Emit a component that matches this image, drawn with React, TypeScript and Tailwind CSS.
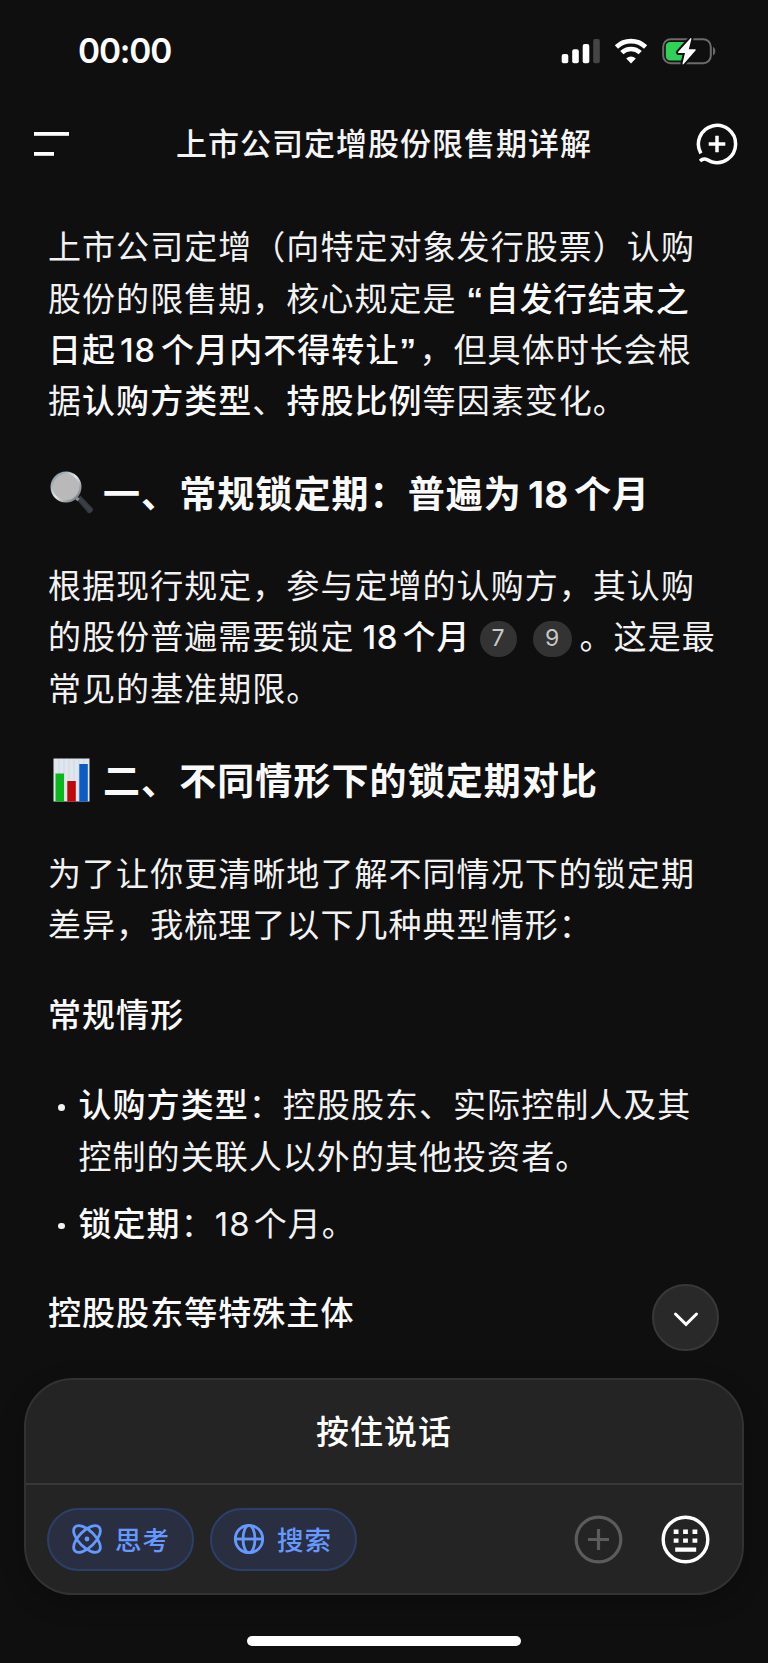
import type { ReactNode } from 'react';

function Line({ children }: { children: ReactNode }) {
  return <span className="block whitespace-nowrap">{children}</span>;
}

function B({ children }: { children: ReactNode }) {
  return <b className="font-medium text-[#fafafa]">{children}</b>;
}

function Cite({ children, className }: { children: ReactNode; className: string }) {
  return (
    <span
      className={`mb-[3px] inline-flex h-9 items-center justify-center rounded-full bg-[#333333] align-middle text-[23px] leading-none tracking-normal text-[#c8c8c8] ${className}`}
    >
      {children}
    </span>
  );
}

function StatusBar() {
  return (
    <div className="flex h-[102px] items-center justify-between pl-[78px] pr-[51px]">
      <span className="pt-[2px] text-[33.500px] font-semibold leading-none tracking-[-1.200px] text-white">00:00</span>
      <div className="flex items-center gap-[14px]">
        <svg width="40" height="26" viewBox="0 0 40 26" fill="#fff">
          <rect x="1.7" y="16" width="6.6" height="9.3" rx="2" />
          <rect x="12.2" y="11.300" width="6.6" height="14" rx="2" />
          <rect x="22.7" y="6" width="6.6" height="19.3" rx="2" />
          <rect x="33.2" y="1" width="6.6" height="24.3" rx="2" fill="#454545" />
        </svg>
        <svg width="34" height="26" viewBox="0 0 34 26" fill="none" stroke="#fff" strokeWidth="4.600">
          <path d="M2.400 9a21.200 21.200 0 0 1 29.200 0" />
          <path d="M7.800 14.700a13.300 13.300 0 0 1 18.400 0" />
          <path d="M17 25.500l-4.800-5a7 7 0 0 1 9.600 0z" fill="#fff" stroke="none" />
        </svg>
        <svg width="55" height="28" viewBox="0 0 55 28">
          <rect x="1.200" y="2.200" width="47.600" height="24" rx="7.500" fill="none" stroke="#6b6b6b" strokeWidth="2" />
          <path d="M51 10v8.400c3-.8 3-7.600 0-8.400z" fill="#6b6b6b" />
          <path d="M8 5h16v18.400H8a4.200 4.200 0 0 1-4.200-4.200V9.200A4.200 4.200 0 0 1 8 5z" fill="#30d158" />
          <path
            d="M28.300 1.400L16.200 14.800c-.5.600-.2 1.200.5 1.200h6.300L20.500 26.500c-.2.900.6 1.200 1.200.5L33.500 13.500c.5-.6.2-1.200-.5-1.200h-6.200L29.400 1.900c.2-.8-.6-1.100-1.100-.5z"
            fill="#fff"
            stroke="#0f0f0f"
            strokeWidth="4"
            paintOrder="stroke"
          />
        </svg>
      </div>
    </div>
  );
}

function Header() {
  return (
    <header className="flex h-[84px] items-center justify-between pl-[34px] pr-[30px]">
      <svg width="38" height="28" viewBox="0 0 38 28" fill="#fff">
        <rect x="0" y="2" width="35" height="3.800" />
        <rect x="0" y="22" width="20" height="3.800" />
      </svg>
      <h1 className="pb-px text-[31px] font-medium leading-none tracking-[1px] text-[#f5f5f5]">上市公司定增股份限售期详解</h1>
      <svg width="42" height="42" viewBox="0 0 42 42" fill="none" stroke="#fff" strokeWidth="3.500">
        <path d="M4.900 30.300A18.600 18.600 0 1 1 15.500 38.770C12 37.500 8.600 33.700 4 38" strokeLinejoin="round" />
        <path d="M21 12.700v16.600M12.700 21h16.600" />
      </svg>
    </header>
  );
}

function MagnifierEmoji() {
  return (
    <svg width="44" height="44" viewBox="0 0 44 44" className="mb-[2px] shrink-0">
      <defs>
        <linearGradient id="handle" x1="0" y1="1" x2="1" y2="0">
          <stop offset="0" stopColor="#16181b" />
          <stop offset="0.500" stopColor="#3c4148" />
          <stop offset="1" stopColor="#15171a" />
        </linearGradient>
        <linearGradient id="rim" x1="0" y1="0" x2="1" y2="1">
          <stop offset="0" stopColor="#6f8796" />
          <stop offset="0.500" stopColor="#e4e8ea" />
          <stop offset="1" stopColor="#596068" />
        </linearGradient>
      </defs>
      <path d="M26.500 28.500l4-4 12.200 12.800c1.500 1.700-2.700 6.200-4.700 4.600z" fill="url(#handle)" />
      <path d="M25 26l3.500 3" stroke="#8a949c" strokeWidth="3" />
      <circle cx="16" cy="16" r="14.300" fill="#b9b9b9" stroke="url(#rim)" strokeWidth="2.400" />
    </svg>
  );
}

function ChartEmoji() {
  return (
    <svg width="44" height="44" viewBox="0 0 44 44" className="mb-[3px] shrink-0">
      <rect x="3.500" y="0.500" width="36" height="43" fill="#dfe6ee" />
      <path d="M9 1v42M14 1v42M19 1v42M24 1v42M29 1v42M34 1v42" stroke="#cfd7e0" strokeWidth="1" />
      <rect x="5.500" y="15.500" width="8.500" height="28" fill="#0bb81c" />
      <rect x="17.300" y="23" width="8.500" height="20.500" fill="#c00808" />
      <rect x="29.300" y="6" width="8.500" height="37.500" fill="#0a5cc4" />
    </svg>
  );
}

function Answer() {
  return (
    <main className="flex h-[1192px] flex-col pl-[48px] pt-[36.400px] text-[33px] leading-[51.200px] tracking-[1.050px] text-[#f2f2f2]">
      <p>
        <Line>上市公司定增（向特定对象发行股票）认购</Line>
        <Line>
          股份的限售期，核心规定是
          <B>
            <span className="inline-block w-[29px] pl-[10px] font-['Liberation_Sans'] font-bold">“</span>自发行结束之
          </B>
        </Line>
        <Line>
          <B>
            日起<span className="inline-block w-[45px] pl-[4px] tracking-[0.500px]">18</span>个月内不得转让
            <span className="inline-block w-[20px] font-['Liberation_Sans'] font-bold">”</span>
          </B>
          ，但具体时长会根
        </Line>
        <Line>
          据<B>认购方类型</B>、<B>持股比例</B>等因素变化。
        </Line>
      </p>

      <h2 className="mt-[41px] flex h-[52px] items-center whitespace-nowrap pl-[2px] text-[37px] font-bold tracking-[1.080px] text-[#fafafa]">
        <MagnifierEmoji />
        <span className="pl-[9px]">
          一、常规锁定期：普遍为<span className="inline-block w-[52px] pl-[6px] tracking-[0.500px]">18</span>个月
        </span>
      </h2>

      <p className="mt-[41px]">
        <Line>根据现行规定，参与定增的认购方，其认购</Line>
        <Line>
          的股份普遍需要锁定
          <B>
            <span className="inline-block w-[48px] pl-[8px] tracking-[0.500px]">18</span>个月
          </B>
          <Cite className="ml-[9px] w-[37px]">7</Cite>
          <Cite className="ml-[16px] mr-[8px] w-[39px]">9</Cite>。这是最
        </Line>
        <Line>常见的基准期限。</Line>
      </p>

      <h2 className="mt-[41px] flex h-[52px] items-center whitespace-nowrap pl-[2px] text-[37px] font-bold tracking-[1.080px] text-[#fafafa]">
        <ChartEmoji />
        <span className="pl-[9px]">二、不同情形下的锁定期对比</span>
      </h2>

      <p className="mt-[41px]">
        <Line>为了让你更清晰地了解不同情况下的锁定期</Line>
        <Line>差异，我梳理了以下几种典型情形：</Line>
      </p>

      <h3 className="mt-[39px] font-medium text-[#fafafa]">常规情形</h3>

      <ul className="mt-[39px] flex flex-col gap-[16px]">
        <li className="flex">
          <span className="ml-[10px] mr-[14px] mt-[24px] size-[6.500px] shrink-0 rounded-full bg-[#f2f2f2]" />
          <div>
            <Line>
              <B>认购方类型</B>：控股股东、实际控制人及其
            </Line>
            <Line>控制的关联人以外的其他投资者。</Line>
          </div>
        </li>
        <li className="flex">
          <span className="ml-[10px] mr-[14px] mt-[24px] size-[6.500px] shrink-0 rounded-full bg-[#f2f2f2]" />
          <Line>
            <B>锁定期</B>：<span className="inline-block w-[39px] tracking-[1px]">18</span>个月。
          </Line>
        </li>
      </ul>

      <div className="mt-[27px] flex items-center justify-between pr-[49px]">
        <h3 className="font-medium text-[#fafafa]">控股股东等特殊主体</h3>
        <button className="mt-[7px] flex size-[67px] items-center justify-center rounded-full border-2 border-[#383838] bg-[#292929]">
          <svg width="26" height="16" viewBox="0 0 26 16" fill="none" stroke="#fff" strokeWidth="3" strokeLinecap="round" className="mt-[3px]">
            <path d="M2.500 3L13 13.300 23.500 3" />
          </svg>
        </button>
      </div>
    </main>
  );
}

function Composer() {
  return (
    <section className="mx-[24px] h-[217px] rounded-[49px] border-2 border-[#323232] bg-[#242424] shadow-[0_8px_24px_rgba(0,0,0,0.250)]">
      <div className="flex h-[105px] items-center justify-center border-b-2 border-[#383838] pt-[3px] text-[33px] font-medium tracking-[1px] text-white">
        按住说话
      </div>
      <div className="flex h-[108px] items-center pl-[21px] pr-[32px] text-[26.500px] font-medium tracking-[1px] text-[#6699ff]">
        <button className="flex h-[63px] w-[147px] items-center rounded-full border-2 border-[#2c3f6b] bg-[#292f40] pl-[22px]">
          <svg width="32" height="32" viewBox="0 0 32 32" fill="none" stroke="currentColor" strokeWidth="2.800">
            <ellipse cx="16" cy="16" rx="17" ry="8.200" transform="rotate(45 16 16)" />
            <ellipse cx="16" cy="16" rx="17" ry="8.200" transform="rotate(-45 16 16)" />
            <circle cx="16" cy="16" r="2.400" fill="currentColor" stroke="none" />
          </svg>
          <span className="pl-[12px] pt-[2px] leading-none">思考</span>
        </button>
        <button className="ml-[16px] flex h-[63px] w-[147px] items-center rounded-full border-2 border-[#2c3f6b] bg-[#292f40] pl-[21px]">
          <svg width="32" height="32" viewBox="0 0 32 32" fill="none" stroke="currentColor" strokeWidth="2.800">
            <circle cx="16" cy="16" r="13.700" />
            <ellipse cx="16" cy="16" rx="6" ry="13.700" />
            <path d="M2.300 16h27.400" />
          </svg>
          <span className="pl-[12px] pt-[2px] leading-none">搜索</span>
        </button>
        <div className="ml-auto flex gap-[38px]">
          <svg width="49" height="49" viewBox="0 0 49 49" fill="none" stroke="#5c5c5c" strokeWidth="3.200">
            <circle cx="24.500" cy="24.500" r="22.300" />
            <path d="M24.500 14v21M14 24.500h21" />
          </svg>
          <svg width="49" height="49" viewBox="0 0 49 49" fill="#fff">
            <circle cx="24.500" cy="24.500" r="22.300" fill="none" stroke="#fff" strokeWidth="3.400" />
            <path d="M12.700 14.600h4.800v4.400h-4.800zM22.100 14.600h4.800v4.400h-4.800zM31.500 14.600h4.800v4.400h-4.800zM12.700 23.400h4.800v4.400h-4.800zM22.100 23.400h4.800v4.400h-4.800zM31.500 23.400h4.800v4.400h-4.800zM14.200 32.500h21v4.200h-21z" />
          </svg>
        </div>
      </div>
    </section>
  );
}

export default function App() {
  return (
    <div className="h-[1663px] w-[768px] overflow-hidden bg-[#0f0f0f] font-['Inter','Noto_Sans_CJK_SC',sans-serif]">
      <StatusBar />
      <Header />
      <Answer />
      <Composer />
      <div className="mx-auto mt-[41px] h-[10px] w-[274px] rounded-full bg-white" />
    </div>
  );
}
